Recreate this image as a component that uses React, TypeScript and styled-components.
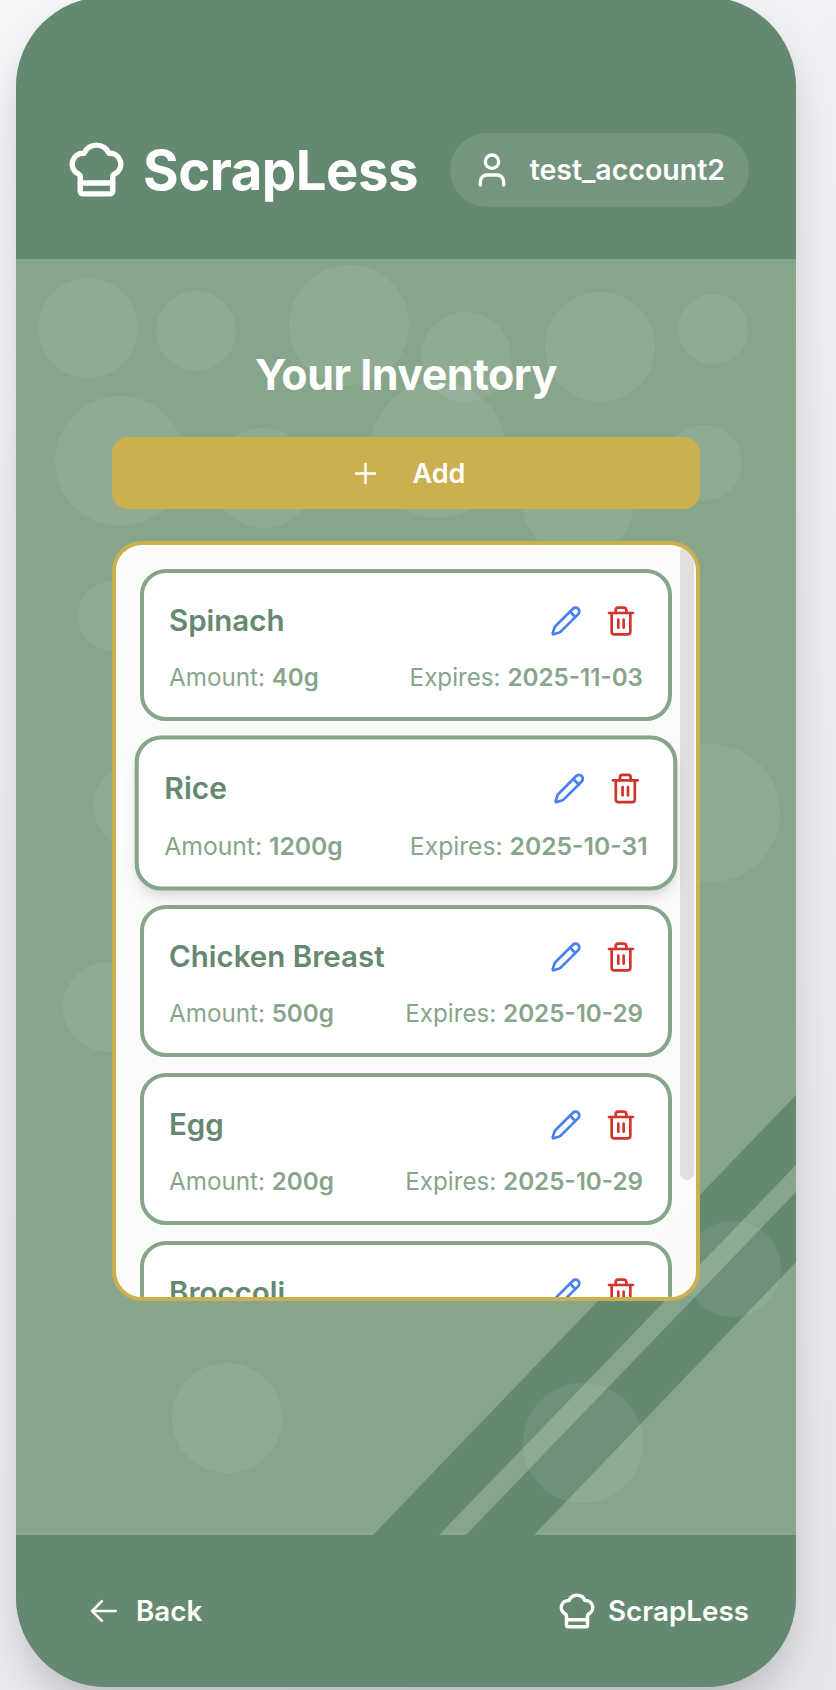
import React from 'react';
import styled, { createGlobalStyle } from 'styled-components';
import { ChefHat, User, Plus, Pencil, Trash2 } from 'lucide-react';

const GlobalStyle = createGlobalStyle`
  html, body { margin: 0; padding: 0; height: 1690px; overflow: hidden; }
  body {
    font-family: Inter, "Noto Sans", "Liberation Sans", sans-serif;
    background: linear-gradient(135deg, #f5f6f8 0%, #e5e7eb 100%);
  }
`;

const Page = styled.div`
  width: 836px;
  height: 1690px;
  padding: 0 40px 0 16px;
  box-sizing: border-box;
`;

const Phone = styled.div`
  width: 780px;
  height: 1690px;
  margin-top: -3px;
  border-radius: 90px;
  overflow: hidden;
  display: flex;
  flex-direction: column;
  background: #87a58a;
  box-shadow: 0 25px 50px -12px rgba(0, 0, 0, 0.25);
`;

const Header = styled.header`
  flex: 0 0 262px;
  box-sizing: border-box;
  background: #658870;
  color: #fff;
  display: flex;
  align-items: center;
  justify-content: space-between;
  padding: 83px 47px 0 48px;
`;

const Logo = styled.div`
  display: flex;
  align-items: center;
  gap: 14px;
  font-size: 54.5px;
  font-weight: 700;
  letter-spacing: -0.5px;
`;

const UserPill = styled.div`
  display: flex;
  align-items: center;
  gap: 18px;
  height: 74px;
  box-sizing: border-box;
  padding: 0 24px 0 22px;
  border-radius: 37px;
  background: rgba(255, 255, 255, 0.11);
  font-size: 28.5px;
  font-weight: 600;
`;

const Main = styled.main`
  flex: 1;
  position: relative;
  overflow: hidden;
  display: flex;
  flex-direction: column;
  align-items: center;
  padding-top: 84px;
`;

const Stripes = styled.svg`
  position: absolute;
  inset: 0;
  width: 100%;
  height: 100%;
`;

const Bubble = styled.div<{ $x: number; $y: number; $r: number }>`
  position: absolute;
  left: ${(p) => p.$x - p.$r - 16}px;
  top: ${(p) => p.$y - p.$r - 259}px;
  width: ${(p) => p.$r * 2}px;
  height: ${(p) => p.$r * 2}px;
  border-radius: 50%;
  background: rgba(255, 255, 255, 0.07);
`;

const Title = styled.h1`
  position: relative;
  margin: 0 0 32px;
  color: #fff;
  font-size: 43px;
  line-height: 62px;
  font-weight: 700;
  letter-spacing: -0.5px;
`;

const AddButton = styled.button`
  position: relative;
  width: 588px;
  height: 72px;
  flex: none;
  border: 0;
  border-radius: 16px;
  background: #ccb04f;
  color: #fff;
  font-family: inherit;
  font-size: 27px;
  font-weight: 600;
  display: flex;
  align-items: center;
  justify-content: center;
  gap: 31px;
`;

const AddIcon = styled(Plus)`
  margin-left: 2px;
`;

const ListFrame = styled.div`
  position: relative;
  margin-top: 32px;
  width: 588px;
  height: 760px;
  flex: none;
  box-sizing: border-box;
  border: 4px solid #ccb04f;
  border-radius: 30px;
  background: rgba(255, 255, 255, 0.96);
  overflow: hidden;
`;

const List = styled.div`
  height: 100%;
  box-sizing: border-box;
  overflow: hidden;
  padding: 24px 24px 0;
  display: flex;
  flex-direction: column;
  gap: 16px;
`;

const ScrollThumb = styled.div`
  position: absolute;
  top: 0;
  right: 2px;
  width: 14px;
  height: 635px;
  border-radius: 7px;
  background: #dfdfdf;
`;

const Card = styled.article<{ $raised?: boolean }>`
  flex: none;
  position: relative;
  height: 152px;
  box-sizing: border-box;
  border: 4px solid #87a58a;
  border-radius: 26px;
  background: #fff;
  padding: 23px 25px 0;
  display: flex;
  flex-direction: column;
  ${(p) =>
    p.$raised
      ? `transform: scale(1.02);
         box-shadow: 0 10px 15px -3px rgba(0,0,0,.1), 0 4px 6px -2px rgba(0,0,0,.05);`
      : ''}
`;

const CardTop = styled.div`
  display: flex;
  align-items: center;
  justify-content: space-between;
  height: 48px;
`;

const Name = styled.h2`
  margin: 0;
  font-size: 29.5px;
  font-weight: 600;
  color: #658870;
`;

const Actions = styled.div`
  display: flex;
  align-items: center;
  gap: 23px;
  padding: 2px 6px 0 0;
`;

const CardInfo = styled.div`
  display: flex;
  justify-content: space-between;
  margin-top: 19px;
  font-size: 24.2px;
  line-height: 30px;
  color: #87a58a;
`;

const Value = styled.strong`
  font-weight: 600;
`;

const Footer = styled.footer`
  flex: 0 0 152px;
  box-sizing: border-box;
  background: #658870;
  color: #fff;
  display: flex;
  align-items: center;
  justify-content: space-between;
  padding: 0 47px 0 69px;
  font-size: 27.8px;
  font-weight: 600;
`;

const FooterItem = styled.div<{ $gap: number }>`
  display: flex;
  align-items: center;
  gap: ${(p) => p.$gap}px;
`;

const bubbles = [
  [88, 328, 50], [196, 331, 40], [349, 325, 60], [466, 357, 45], [600, 347, 55], [713, 329, 35],
  [120, 461, 65], [263, 478, 50], [438, 450, 68], [704, 463, 38], [578, 501, 56],
  [113, 616, 35], [140, 806, 46], [711, 813, 69], [108, 1007, 45], [733, 1269, 48],
  [227, 1418, 55], [583, 1443, 60],
];

const items = [
  { name: 'Spinach', amount: '40g', expires: '2025-11-03' },
  { name: 'Rice', amount: '1200g', expires: '2025-10-31', raised: true },
  { name: 'Chicken Breast', amount: '500g', expires: '2025-10-29' },
  { name: 'Egg', amount: '200g', expires: '2025-10-29' },
  { name: 'Broccoli', amount: '300g', expires: '2025-10-28' },
];

export default function App() {
  return (
    <>
      <GlobalStyle />
      <Page>
        <Phone>
          <Header>
            <Logo>
              <ChefHat size={65} strokeWidth={2} />
              ScrapLess
            </Logo>
            <UserPill>
              <User size={40} strokeWidth={2} />
              test_account2
            </UserPill>
          </Header>
          <Main>
            <Stripes viewBox="0 0 780 1276" aria-hidden="true">
              <polygon points="357,1276 780,836 780,906 423,1276" fill="#658870" />
              <polygon points="450,1276 780,933 780,1003 518,1276" fill="#658870" />
            </Stripes>
            {bubbles.map(([x, y, r], i) => (
              <Bubble key={i} $x={x} $y={y} $r={r} />
            ))}
            <Title>Your Inventory</Title>
            <AddButton>
              <AddIcon size={33} strokeWidth={1.7} />
              Add
            </AddButton>
            <ListFrame>
              <ScrollThumb />
              <List>
                {items.map((it) => (
                  <Card key={it.name} $raised={it.raised}>
                    <CardTop>
                      <Name>{it.name}</Name>
                      <Actions>
                        <Pencil size={32} color="#4a7fee" strokeWidth={2} />
                        <Trash2 size={32} color="#d0342c" strokeWidth={2} />
                      </Actions>
                    </CardTop>
                    <CardInfo>
                      <span>Amount: <Value>{it.amount}</Value></span>
                      <span>Expires: <Value>{it.expires}</Value></span>
                    </CardInfo>
                  </Card>
                ))}
              </List>
            </ListFrame>
          </Main>
          <Footer>
            <FooterItem $gap={13}>
              <svg width="38" height="38" viewBox="0 0 24 24" fill="none" stroke="currentColor" strokeWidth="1.6" strokeLinecap="round" strokeLinejoin="round" aria-hidden="true">
                <path d="M19.5 12H4.5M10.7 5.8 4.5 12l6.2 6.2" />
              </svg>
              Back
            </FooterItem>
            <FooterItem $gap={10}>
              <ChefHat size={42} strokeWidth={2} />
              ScrapLess
            </FooterItem>
          </Footer>
        </Phone>
      </Page>
    </>
  );
}
